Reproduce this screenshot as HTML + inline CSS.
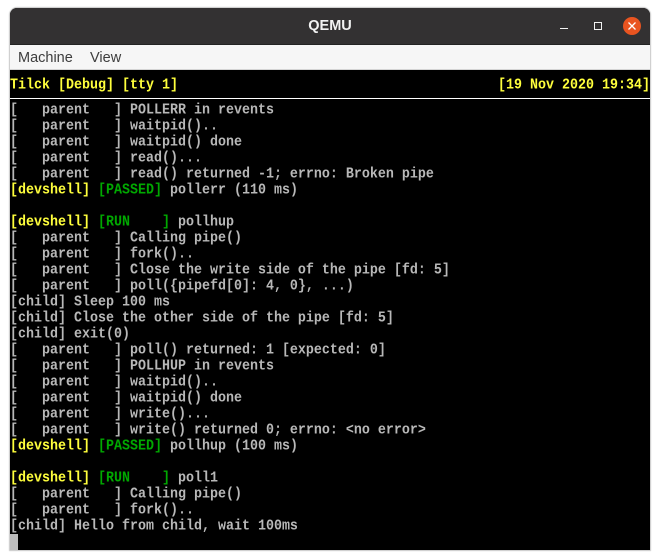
<!DOCTYPE html>
<html>
<head>
<meta charset="utf-8">
<style>
html,body{margin:0;padding:0;background:#fff;width:660px;height:560px;overflow:hidden}
#win{position:absolute;left:10px;top:8px;width:640px;height:542px;background:#000;border-radius:7px 7px 0 0;overflow:hidden;box-shadow:0 0 1px 1px #c8c8c8}
#title{position:absolute;left:0;top:0;width:640px;height:36px;background:#333132;border-bottom:1px solid #232323;color:#f2f2f2;font:bold 14.5px "Liberation Sans",sans-serif;line-height:36px;text-align:center}
#menu{position:absolute;left:0;top:37px;width:640px;height:24px;background:#f6f6f6;border-bottom:1px solid #d4d4d4;color:#3d3d3d;font:14.5px "Liberation Sans",sans-serif;line-height:26px}
#menu span{position:absolute;top:0}
#term{position:absolute;left:0;top:62px;width:640px;height:480px;background:#000}
.l{position:absolute;left:0;height:16px;white-space:pre;font:bold 13.33px/16px "Liberation Mono",monospace;color:#b8b8b8;transform:translateY(1px) scaleY(1.14);transform-origin:50% 50%}
.y{color:#ffff3c}.g{color:#00a800}
#hr{position:absolute;left:0;top:28px;width:640px;height:1px;background:#fff}
#cur{position:absolute;left:0;top:464px;width:8px;height:16px;background:#bcbcbc}
svg{position:absolute;left:0;top:0}
</style>
</head>
<body>
<div id="win">
<div id="title">QEMU</div>
<div id="menu"><span style="left:8px">Machine</span><span style="left:80px">View</span></div>
<div id="term">
<div class="l y" style="top:7px">Tilck [Debug] [tty 1]</div>
<div class="l y" style="top:7px;left:488px">[19 Nov 2020 19:34]</div>
<div id="hr"></div>
<div class="l" style="top:32px">[   parent   ] POLLERR in revents</div>
<div class="l" style="top:48px">[   parent   ] waitpid()..</div>
<div class="l" style="top:64px">[   parent   ] waitpid() done</div>
<div class="l" style="top:80px">[   parent   ] read()...</div>
<div class="l" style="top:96px">[   parent   ] read() returned -1; errno: Broken pipe</div>
<div class="l" style="top:112px"><span class="y">[devshell]</span> <span class="g">[PASSED]</span> pollerr (110 ms)</div>
<div class="l" style="top:144px"><span class="y">[devshell]</span> <span class="g">[RUN    ]</span> pollhup</div>
<div class="l" style="top:160px">[   parent   ] Calling pipe()</div>
<div class="l" style="top:176px">[   parent   ] fork()..</div>
<div class="l" style="top:192px">[   parent   ] Close the write side of the pipe [fd: 5]</div>
<div class="l" style="top:208px">[   parent   ] poll({pipefd[0]: 4, 0}, ...)</div>
<div class="l" style="top:224px">[child] Sleep 100 ms</div>
<div class="l" style="top:240px">[child] Close the other side of the pipe [fd: 5]</div>
<div class="l" style="top:256px">[child] exit(0)</div>
<div class="l" style="top:272px">[   parent   ] poll() returned: 1 [expected: 0]</div>
<div class="l" style="top:288px">[   parent   ] POLLHUP in revents</div>
<div class="l" style="top:304px">[   parent   ] waitpid()..</div>
<div class="l" style="top:320px">[   parent   ] waitpid() done</div>
<div class="l" style="top:336px">[   parent   ] write()...</div>
<div class="l" style="top:352px">[   parent   ] write() returned 0; errno: &lt;no error&gt;</div>
<div class="l" style="top:368px"><span class="y">[devshell]</span> <span class="g">[PASSED]</span> pollhup (100 ms)</div>
<div class="l" style="top:400px"><span class="y">[devshell]</span> <span class="g">[RUN    ]</span> poll1</div>
<div class="l" style="top:416px">[   parent   ] Calling pipe()</div>
<div class="l" style="top:432px">[   parent   ] fork()..</div>
<div class="l" style="top:448px">[child] Hello from child, wait 100ms</div>
<div id="cur"></div>
</div>
<svg width="640" height="37" viewBox="0 0 640 37">
<rect x="550" y="20" width="8" height="1" fill="#f2f2f2"/>
<rect x="584.5" y="14.5" width="7" height="7" fill="none" stroke="#f2f2f2" stroke-width="1"/>
<circle cx="622" cy="18" r="9" fill="#e95420"/>
<path d="M618.5 14.5L625.5 21.5M625.5 14.5L618.5 21.5" stroke="#fff" stroke-width="1.3" fill="none"/>
</svg>
</div>
</body>
</html>
